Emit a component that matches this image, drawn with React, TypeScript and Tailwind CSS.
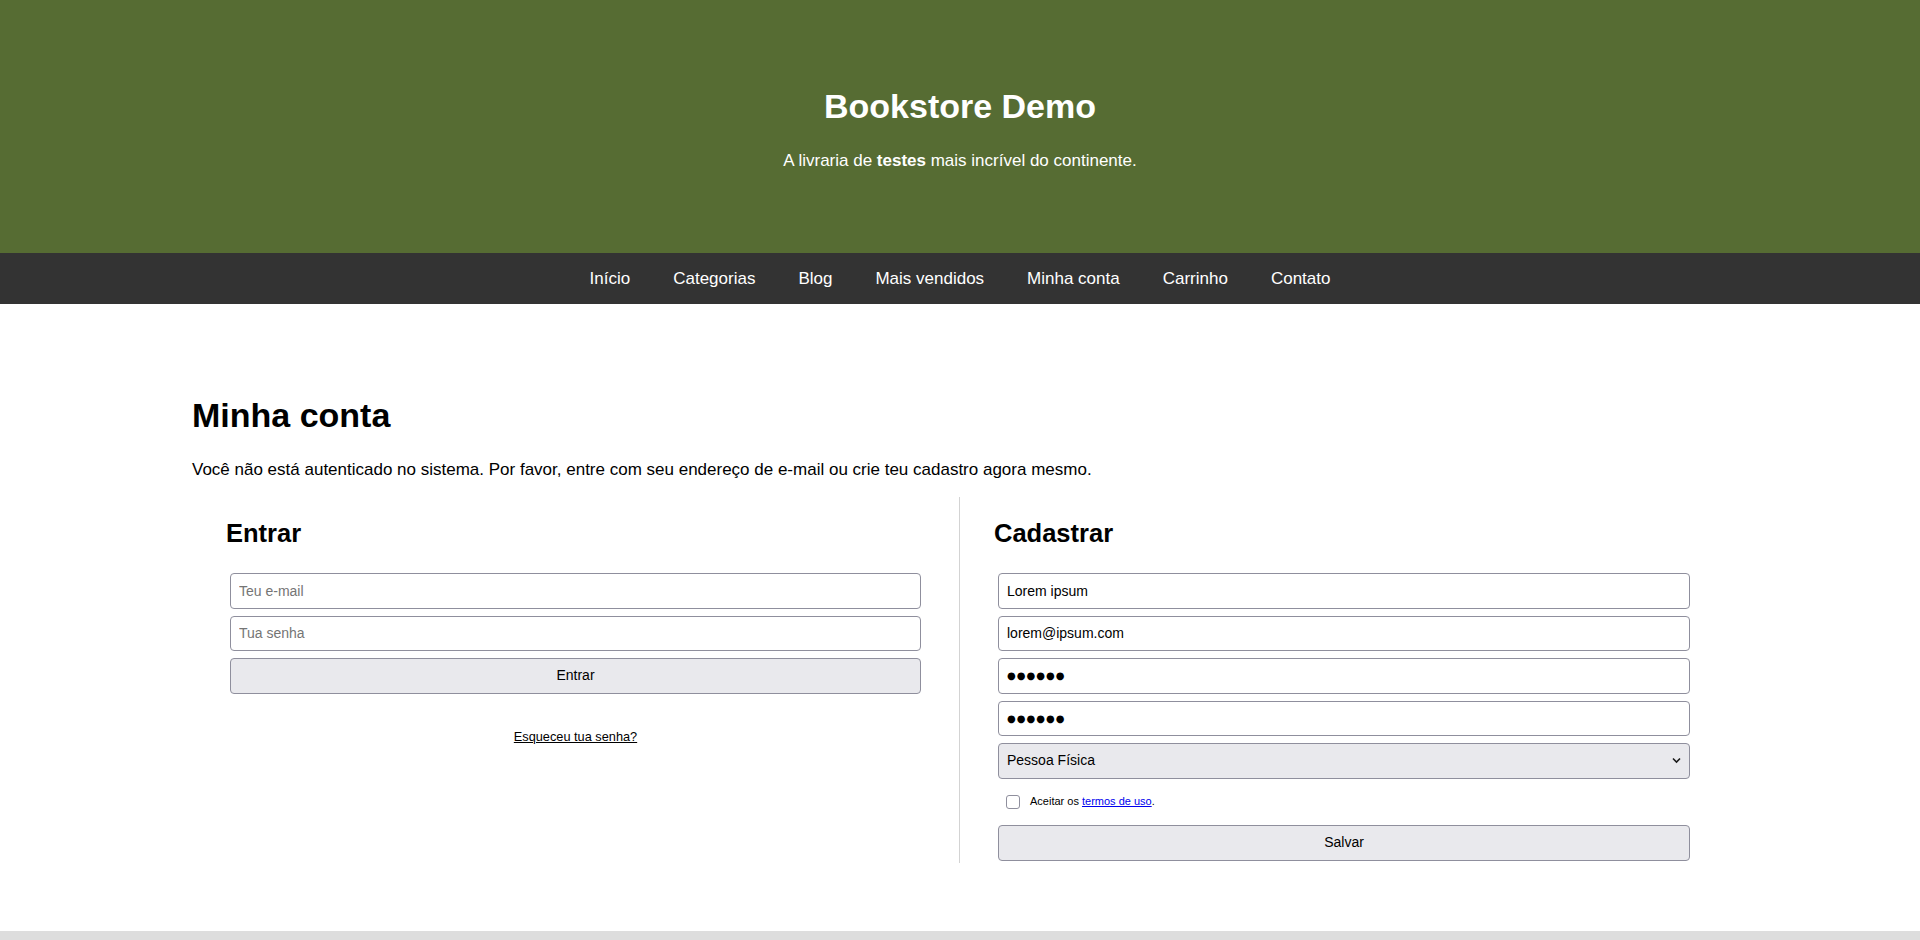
import React from 'react';

const navItems = ['Início', 'Categorias', 'Blog', 'Mais vendidos', 'Minha conta', 'Carrinho', 'Contato'];

const inputCls =
    'block w-full h-[35.5px] px-2 border border-[#8f8f9d] rounded-[4px] bg-white text-[14px] text-black placeholder:text-[#757575] outline-none';
const buttonCls =
    'block w-full h-[35.5px] border border-[#8f8f9d] rounded-[4px] bg-[#e9e9ed] text-[14px] text-black';
// masked value drawn with big dots, like the reference's password fields
const dotsCls =
    'block w-full h-[35.5px] px-2 border border-[#8f8f9d] rounded-[4px] bg-white text-[10px] tracking-[1px] text-black outline-none font-["DejaVu_Sans",sans-serif]';

export default function App() {
    return (
        <div className="bg-white text-black font-['Liberation_Sans',Arial,sans-serif] text-[17px]">
            {/* Header */}
            <header className="h-[253px] bg-[#566c33] text-white flex flex-col items-center pt-[86px]">
                <h1 className="text-[34px] leading-[40px] font-bold">Bookstore Demo</h1>
                <p className="mt-[25px] text-[17px] leading-[20px]">
                    A livraria de <strong className="font-bold">testes</strong> mais incrível do continente.
                </p>
            </header>

            {/* Nav */}
            <nav className="h-[51px] bg-[#333333] flex items-center justify-center">
                {navItems.map(item => (
                    <a key={item} className="px-[21.5px] text-white text-[17px] leading-[20px] cursor-pointer">
                        {item}
                    </a>
                ))}
            </nav>

            {/* Main */}
            <main className="w-[1536px] mx-auto pt-[91px] pb-[68px]">
                <h1 className="text-[34px] leading-[40px] font-bold">Minha conta</h1>
                <p className="mt-[25px] leading-[20px]">
                    Você não está autenticado no sistema. Por favor, entre com seu endereço de e-mail ou crie teu
                    cadastro agora mesmo.
                </p>

                <div className="mt-[17px] grid grid-cols-2">
                    {/* Login */}
                    <section className="border-r border-[#d3d3d3] px-[34px] pt-[21px]">
                        <h2 className="text-[25.5px] leading-[30px] font-bold">Entrar</h2>
                        <form className="mt-[25px] px-[4px] flex flex-col gap-[7px]">
                            <input type="email" placeholder="Teu e-mail" className={inputCls} />
                            <input type="password" placeholder="Tua senha" className={inputCls} />
                            <button type="button" className={buttonCls}>
                                Entrar
                            </button>
                            <div className="mt-[28px] text-center text-[12.75px] leading-[15px]">
                                <a className="underline cursor-pointer">Esqueceu tua senha?</a>
                            </div>
                        </form>
                    </section>

                    {/* Register */}
                    <section className="px-[34px] pt-[21px] pb-[2.5px]">
                        <h2 className="text-[25.5px] leading-[30px] font-bold">Cadastrar</h2>
                        <form className="mt-[25px] px-[4px] flex flex-col gap-[7px]">
                            <input type="text" defaultValue="Lorem ipsum" className={inputCls} />
                            <input type="email" defaultValue="lorem@ipsum.com" className={inputCls} />
                            <input type="text" defaultValue="●●●●●●" className={dotsCls} />
                            <input type="text" defaultValue="●●●●●●" className={dotsCls} />
                            <div className="relative">
                                <select
                                    defaultValue="pf"
                                    className="block w-full h-[35.5px] pl-2 pr-8 appearance-none border border-[#8f8f9d] rounded-[4px] bg-[#e9e9ed] text-[14px] text-black outline-none"
                                >
                                    <option value="pf">Pessoa Física</option>
                                    <option value="pj">Pessoa Jurídica</option>
                                </select>
                                <svg
                                    className="absolute right-[9px] top-[14px] pointer-events-none"
                                    width="9"
                                    height="7"
                                    viewBox="0 0 9 7"
                                    fill="none"
                                >
                                    <path d="M1 1.5 L4.5 5 L8 1.5" stroke="#1a1a1a" strokeWidth="1.6" />
                                </svg>
                            </div>
                            <label className="mt-[8.5px] mb-[9px] flex items-center h-[15px] pl-[8px] text-[11px] leading-[15px]">
                                <input
                                    type="checkbox"
                                    className="appearance-none w-[14px] h-[14px] border border-[#8f8f9d] rounded-[3px] bg-white mr-[10px]"
                                />
                                <span>
                                    Aceitar os{' '}
                                    <a className="text-[#0000ee] underline cursor-pointer">termos de uso</a>.
                                </span>
                            </label>
                            <button type="button" className={buttonCls}>
                                Salvar
                            </button>
                        </form>
                    </section>
                </div>
            </main>

            {/* Footer */}
            <footer className="h-[12px] bg-[#dddddd]" />
        </div>
    );
}
